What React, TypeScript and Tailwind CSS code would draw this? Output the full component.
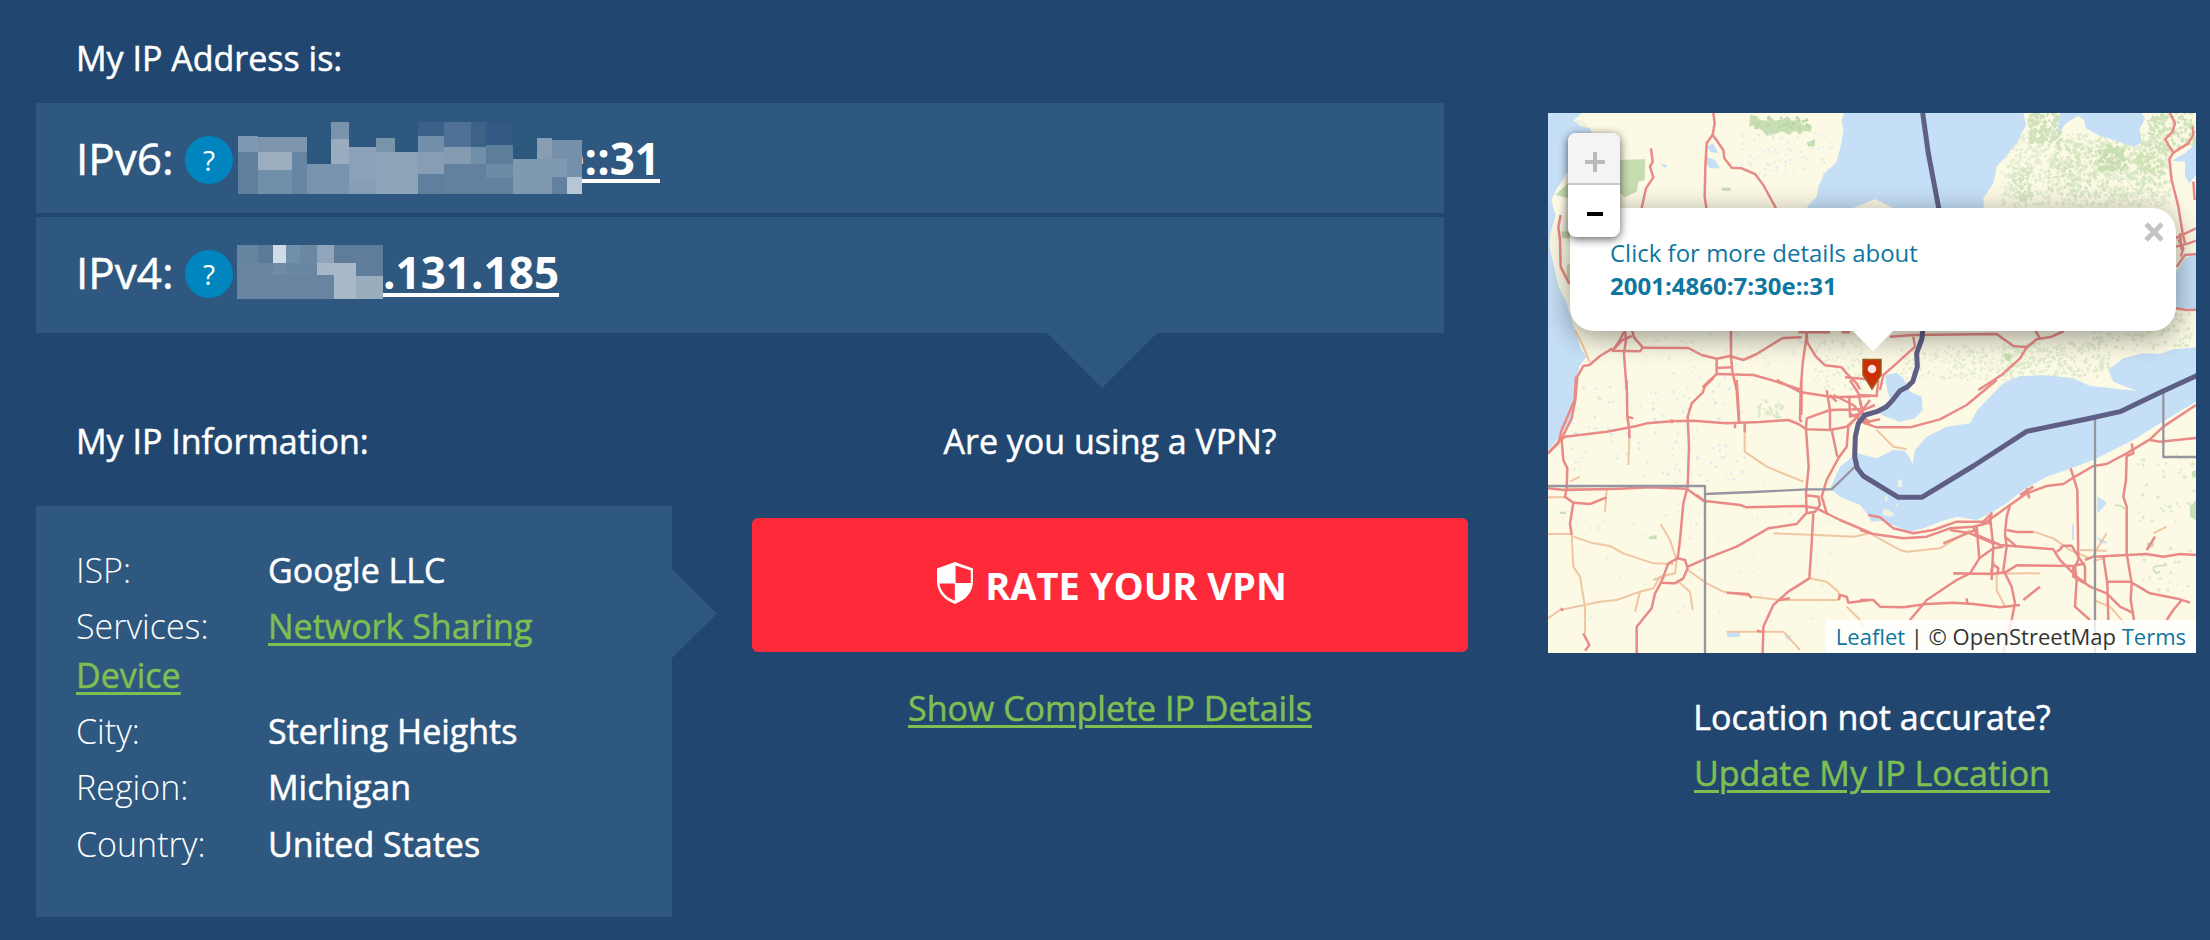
import React from "react";

type Cell = [number, number, number, number, string];

const cellsV6: Cell[] = [
  [0, 0, 207, 90, "#2c587f"],
  [0, 42, 60, 48, "#7e9ab2"],
  [60, 45, 147, 45, "#7e95ae"],
  [0, 90, 60, 126, "#5f809f"],
  [60, 90, 102, 54, "#9aaebf"],
  [60, 144, 102, 72, "#708fa9"],
  [162, 90, 45, 126, "#6685a2"],
  [207, 0, 72, 126, "#2c587f"],
  [207, 126, 126, 90, "#7893ac"],
  [279, 0, 54, 51, "#7893aa"],
  [279, 51, 54, 75, "#9aadbe"],
  [333, 75, 81, 99, "#8ba1ba"],
  [333, 174, 81, 42, "#869db6"],
  [414, 48, 57, 42, "#7894ab"],
  [414, 90, 126, 126, "#8ca3b8"],
  [540, 0, 78, 42, "#3a6187"],
  [540, 42, 78, 48, "#718fa8"],
  [540, 90, 78, 66, "#869db4"],
  [540, 156, 78, 60, "#5f7f9e"],
  [618, 0, 81, 75, "#4f7195"],
  [618, 75, 81, 51, "#839cb2"],
  [618, 126, 207, 90, "#62819f"],
  [699, 0, 45, 75, "#3c6288"],
  [699, 75, 45, 51, "#718fa8"],
  [744, 0, 81, 69, "#335a85"],
  [744, 69, 81, 57, "#5d7e9b"],
  [744, 126, 81, 42, "#6b8ba6"],
  [825, 0, 207, 111, "#2c587e"],
  [825, 111, 162, 105, "#7e99b0"],
  [897, 48, 45, 63, "#869db3"],
  [942, 54, 90, 57, "#7590aa"],
  [987, 111, 45, 54, "#7590aa"],
  [942, 165, 45, 51, "#62819e"],
  [987, 165, 45, 51, "#b6c6d4"],
];

const cellsV4: Cell[] = [
  [0, 0, 438, 162, "#6884a0"],
  [0, 0, 63, 54, "#66849f"],
  [63, 0, 45, 54, "#5b7c99"],
  [108, 0, 39, 54, "#cfdbe5"],
  [147, 0, 42, 54, "#718eaa"],
  [108, 54, 39, 36, "#6f8ba8"],
  [189, 0, 51, 54, "#6b88a3"],
  [147, 54, 93, 36, "#6a87a2"],
  [240, 0, 51, 54, "#90a5b9"],
  [291, 0, 147, 93, "#5f7d9b"],
  [240, 54, 117, 36, "#a6b8c7"],
  [291, 54, 66, 108, "#a8bac9"],
  [357, 93, 81, 69, "#9aadbf"],
];

function Mosaic({ cells, w, h }: { cells: Cell[]; w: number; h: number }) {
  return (
    <svg width={w} height={h} viewBox={`0 0 ${w * 3} ${h * 3}`} shapeRendering="crispEdges" className="block shrink-0">
      {cells.map(([x, y, cw, ch, f], i) => (
        <rect key={i} x={x} y={y} width={cw} height={ch} fill={f} />
      ))}
    </svg>
  );
}

function Help() {
  return (
    <span className="mt-1 flex size-12 shrink-0 items-center justify-center rounded-full bg-[#0085be] text-[28px] leading-none">
      ?
    </span>
  );
}

function Shield() {
  return (
    <svg width="36" height="42" viewBox="0 0 36 42" className="-mt-1 block shrink-0">
      <path
        fill="#fff"
        fillRule="evenodd"
        d="M18 0L36 6.500V19C36 31 28 38 18 42C8 38 0 31 0 19V6.500ZM18.600 3.500V21H33.800V8.600ZM17.800 21.600H2.400C3.400 29.500 9 35.500 17.800 38.800Z"
      />
    </svg>
  );
}

// Deterministic scatter of small specks used for woodland and ponds.
function specks(seed: number, n: number, x: number, y: number, w: number, h: number, size: number) {
  let s = seed;
  const r = () => {
    s = (s * 16807) % 2147483647;
    return s / 2147483647;
  };
  let d = "";
  for (let i = 0; i < n; i++) {
    const px = Math.round(x + r() * w);
    const py = Math.round(y + r() * h);
    const a = Math.round(2 + r() * size);
    const b = Math.round(2 + r() * size);
    d += `M${px} ${py}l${a} ${-b}l${b} ${a}l${-a} ${b}z`;
  }
  return d;
}

const redA = [
  "M520 39L524 70L518 104L500 130L496 200L494 290L500 330",
  "M518 104L550 150L553 175L575 203L605 205L645 222L670 255L708 325",
  "M333 145L338 185L330 200L340 232L318 265L305 325",
  "M62 345L55 380L60 420L62 500L88 552",
  "M255 690L258 720L252 760L260 870",
  "M252 695L240 720L218 752L300 754L308 742L282 712L276 690",
  "M218 745L180 768L148 795L130 798L112 830L106 900L95 955L65 1015L24 1060",
  "M218 752L245 722L275 708",
  "M305 743L445 744L485 765L530 776L570 768L610 780L650 762L728 714L785 712",
  "M573 693L573 770L578 820L590 870L597 970",
  "M530 776L530 822L490 860L510 840M530 804L575 802",
  "M530 822L640 825L700 842L780 868",
  "M785 690L800 700L798 720L788 790L782 870L780 960L786 965",
  "M800 700L802 728L828 770L855 796L905 802L920 820L950 850L960 868M775 697L870 697M905 697L930 697M915 832L985 838",
];
const redB = [
  "M930 39L945 70L938 95L915 118L940 158L928 178L935 240L955 320L968 400L975 430",
  "M940 158L985 130L1000 105L998 80",
  "M1000 245L1004 300M945 415L1008 385M948 440L985 430L1008 422M950 500L975 465L1008 462M955 418L970 445L962 470M948 625L980 630L1008 629M960 400L965 450",
  "M90 710L160 705L410 702L460 738L500 742L530 718L575 710L612 693",
  "M500 742L480 775L425 825L355 870M160 710L165 740L110 790L70 825L60 870M525 690L540 715",
];
const redC = [
  "M108 -10L104 60L65 150L55 190L24 220",
  "M55 185L75 170L200 155L290 138L320 130L395 124L460 122L560 130L660 126L745 120L775 132L800 148L870 150",
  "M260 0L262 110L268 150L268 175M262 110L280 115M395 118L395 130M585 130L585 145M614 130L614 158",
  "M520 -5L495 18L488 38L455 70L443 110L447 200L443 320L430 370L420 480L413 535",
  "M710 0L780 36L880 52L935 50L990 48",
  "M590 0L594 60L598 130M783 0L785 40L784 105",
  "M800 115L798 148L806 260L798 340L800 400L825 395L840 375L835 350L798 346",
  "M65 180L70 240L82 265L80 325L75 350L100 368L90 430L95 465",
  "M24 325L75 330L240 326L330 322L440 326L490 362L600 375L620 382L790 378L830 385L900 420L990 458",
  "M100 368L150 372L200 352M470 345L500 368",
  "M413 535L385 550L363 608L405 610L430 595L443 565L435 540L413 535",
  "M363 608L345 640L335 685L290 740L290 820",
  "M443 560L500 535L590 500L685 445L770 432L798 400",
  "M820 400L815 490L808 595L745 635L700 675L670 740L668 820",
  "M990 60L960 100L925 140L920 200L895 235L860 300L845 350L862 405M875 150L892 230M870 150L920 140L960 105",
  "M560 638L625 642L635 655M720 660L750 655M895 660L900 645L920 650L925 668L990 660M650 752L665 755M62 685L70 692M130 760L148 795L135 812",
  "M870 90L870 148M928 50L930 110L960 100M870 90L960 88M800 115L870 90M880 45L940 75L990 130M930 0L955 40L970 110M860 30L870 90M890 65L870 45",
];
const redD = [
  "M10 128L50 142L150 142L240 118L320 75L410 0",
  "M0 45L50 48L55 0M0 95L45 75M10 128L60 118M0 60L15 130L-30 100",
  "M0 450L40 462L130 475L200 470L270 445L340 440L380 430",
  "M25 405L60 412L100 445L160 460L220 450L290 425L380 425L450 375L500 340L560 318L610 312L640 293L700 258L740 252L800 220L870 178L910 140L1008 75",
  "M480 345L520 320M500 325L508 355M632 265L640 290L652 330L655 540L645 560L650 600L645 680L690 720",
  "M815 190L820 220L800 228L798 300L790 350L800 380L800 520L815 610L812 660L822 720",
  "M870 180L900 185L1008 174",
  "M450 375L440 410L435 460L440 500L430 570L455 620L465 670L455 720L430 820",
  "M390 410L400 500L395 600M350 440L358 535L330 580L290 600L200 660L150 720",
  "M340 440L350 465L420 495L580 508L600 540L650 590L690 620L740 640L780 680L822 700",
  "M250 490L350 448M270 450L330 460L400 490M440 450L470 456L520 456M435 470L470 500",
  "M600 505L610 497L635 497L655 530L675 560L675 610M605 505L590 515",
  "M280 580L400 582L440 575L470 556L640 558L675 550M675 540L700 530L860 522L910 530L960 522L1008 525",
  "M0 660L40 660L60 680L130 682L200 672L280 668L340 672L420 682L480 675M320 655L322 672M490 660L540 620",
  "M395 550L415 565L412 582M400 545L392 582M358 535L400 505L430 500M730 530L742 610L745 720M740 605L810 605L870 640L960 658L990 668M965 660L940 690L920 720",
  "M860 510L885 470M640 560L640 590L675 610M370 425L395 400L388 430Z",
];
const orange = [
  "M100 1310L160 1330L210 1338L250 1360L340 1390L400 1392M24 1302L95 1302L100 1400L120 1430L135 1520L135 1600",
  "M24 1555L60 1530L180 1505L230 1500L300 1475L340 1465L360 1430L405 1420L410 1380L390 1320L362 1272",
  "M443 1410L500 1450L550 1475L640 1490L720 1500L895 1500M410 1440L450 1475L458 1530M300 1475L285 1535",
  "M614 1000L614 1055L680 1100L740 1125L790 1145M268 1015L265 1095M700 1300L830 1305L940 1310L990 1300L1080 1350L1100 1355L1200 1345L1290 1290",
  "M808 1435L860 1445L895 1475L900 1500M920 1520L960 1560L970 1580M90 1145L120 1130M75 1165L200 1168L195 1235M24 1192L75 1192M730 1595L780 1650M560 1595L730 1595",
  "M105 690L130 740L148 785M1010 990L1060 1040L1100 1047M1480 1295L1540 1315L1590 1350L1650 1375M1370 1420L1370 1470L1395 1520M1700 1300L1660 1365M1240 1422L1500 1420M1840 1300L1880 1280",
  "M340 1440L380 1425M1620 1350L1700 1352M1660 1385L1700 1370M1660 1500L1710 1520L1780 1600",
];

function MapArt() {
  return (
    <svg width="648" height="540" viewBox="24 39 1944 1620" preserveAspectRatio="none" className="block">
      <defs>
        <filter id="soft" x="0" y="0" width="1" height="1">
          <feGaussianBlur stdDeviation="0.700" />
        </filter>
      </defs>
      <g filter="url(#soft)" strokeLinejoin="round">
        <rect x="0" y="0" width="2000" height="1700" fill="#fcfae5" />
        <path fill="#c7dcb0" d="M235 180L316 178L314 240L295 245L290 275L255 292L240 280ZM45 285L85 250V295ZM545 263H572V272H545ZM800 128L825 118V138L805 140ZM65 395L90 392V415H65ZM80 495L92 490V550L80 540Z" />
        <path fill="#c9deb3" d="M630 45L650 48L660 60L680 62L690 50L705 62L730 56L742 48L756 62L775 60L790 75L815 78L814 95L790 92L780 104L762 88L750 105L725 94L700 104L680 108L668 92L655 85L645 88L640 76L628 80Z" />
        <path fill="#b9d6a3" d={specks(3, 30, 640, 50, 160, 45, 6)} />
        <path fill="#e3edcf" d={specks(7, 900, 1380, 100, 510, 220, 6)} />
        <path fill="#d6e6c1" d={specks(5, 320, 1520, 120, 350, 170, 7)} />
        <path fill="#d0e2ba" d={specks(17, 160, 1460, 39, 95, 90, 7)} />
        <path fill="#d6e6c1" d={specks(27, 80, 1410, 200, 60, 100, 6)} />
        <path fill="#cfe2b8" d={specks(37, 150, 1820, 39, 145, 110, 7)} />
        <path fill="#c9dfb3" d={specks(47, 90, 1670, 140, 80, 70, 8)} />
        <path fill="#cfe2b8" d={specks(49, 60, 1780, 160, 90, 60, 7)} />
        <path fill="#dfebcc" d={specks(57, 260, 1380, 730, 330, 100, 6)} />
        <path fill="#e3edd2" d={specks(67, 200, 1080, 740, 360, 100, 5)} />
        <path fill="#dfebcc" d={specks(77, 110, 1650, 640, 300, 110, 6)} />
        <path fill="#dcebc9" d={specks(87, 40, 650, 900, 75, 55, 6)} />
        <path fill="#e2edd2" d={specks(97, 90, 820, 720, 150, 160, 4)} />
        <path fill="#dcebc9" d={specks(107, 60, 1790, 1060, 170, 420, 6)} />
        <path fill="#c9dfb5" d="M1955 1115L1968 1110V1130L1958 1135ZM1950 1220L1968 1200V1260L1950 1250ZM1390 760L1415 765L1410 785L1395 778ZM325 1310L350 1305V1318H328ZM60 1235H78V1242H60ZM1820 1330L1840 1325L1842 1340L1825 1345Z" />
        <path fill="none" stroke="#cbe0b6" strokeWidth="5" d="M1838 1405L1850 1398L1880 1396M1838 1408L1850 1420L1860 1415M1725 1215L1745 1218L1755 1228" />
        <path fill="#dfeaec" d={specks(117, 110, 90, 850, 520, 300, 5)} />
        <path fill="#e2ecec" d={specks(127, 80, 600, 100, 280, 130, 4)} />
        <path fill="#e6eee9" d={specks(137, 90, 100, 1150, 800, 420, 4)} />
        <path fill="#e6eee9" d={specks(147, 60, 300, 700, 480, 140, 4)} />

        <g fill="#c5dff6">
          <path d="M24 39H125L100 62L150 85L160 110L120 160L95 200L75 228L48 270L34 300L46 345L32 400L28 440L42 500L56 560L80 610L104 690L122 745L138 770L118 800L106 850L100 940L66 1000L38 1035L24 1052Z" />
          <path d="M912 39L905 60L910 90L904 130L890 185L852 222L835 260L830 290L802 320V400H940V324L990 303L1005 297L1060 324V400H1330L1332 324L1330 295L1360 250L1370 200L1430 130L1458 75L1450 39Z" />
          <path d="M1560 39L1552 100L1580 68L1615 48L1632 60L1638 85L1680 108L1715 118L1750 130L1780 142L1805 125L1798 90L1815 55L1805 39Z" />
          <path d="M1895 182L1935 160L1968 130V225L1948 250L1935 230V185Z" />
          <path d="M1908 515L1935 475L1968 462V628L1905 622Z" />
          <path d="M1035 825L1070 818L1090 835L1110 875L1145 890L1148 930L1125 955L1080 965L1025 945L1010 930L1050 900L1040 860Z" />
          <path d="M870 1165L900 1100L950 1060L1010 1075L1060 1050L1095 1052L1113 1080L1117 1095L1125 1050L1160 1010L1220 980L1290 970L1312 930L1360 880L1390 850L1440 828L1520 826L1600 835L1650 858L1690 862L1740 868L1790 872L1720 845L1705 810L1750 775L1810 760L1860 762L1900 748L1968 742V905L1860 970L1780 1020L1660 1080L1580 1110L1520 1130L1450 1170L1400 1210L1350 1240L1310 1260L1250 1250L1200 1265L1150 1285L1110 1295L1070 1280L1030 1262L995 1265L980 1240L960 1215L900 1190Z" />
          <path d="M500 140L520 130L535 160L512 155ZM500 170L525 180L540 205L510 205L498 190ZM362 192L382 195L375 205ZM560 1598L600 1592V1610L562 1612ZM735 1610L755 1606L748 1622ZM1596 1275L1602 1272V1320H1597ZM1672 1190L1690 1200L1700 1210L1672 1240ZM1672 1310L1705 1330L1680 1330Z" />
        </g>
        <path fill="#f2f3df" d="M102 60L128 60L150 85L120 78ZM1075 1140L1087 1138L1085 1162L1073 1160ZM1035 1190L1042 1188V1202H1035ZM1030 1228L1045 1230L1062 1242L1055 1250L1028 1246ZM1068 1212L1075 1214L1070 1222Z" />

        <g fill="none" stroke="#f0c6a2" strokeWidth="6">
          {orange.map((d) => (
            <path key={d} d={d} />
          ))}
        </g>
        <g fill="none" stroke="#e98a86" strokeWidth="7.500">
          {redA.map((d) => (
            <path key={d} d={d} />
          ))}
          <g transform="translate(960 0)">
            {redB.map((d) => (
              <path key={d} d={d} />
            ))}
          </g>
          <g transform="translate(0 840)">
            {redC.map((d) => (
              <path key={d} d={d} />
            ))}
          </g>
          <g transform="translate(960 840)">
            {redD.map((d) => (
              <path key={d} d={d} />
            ))}
          </g>
        </g>
        <g fill="none" stroke="#9596a0" strokeWidth="7">
          <path d="M24 1158H495V1660M495 1182L640 1176L800 1168L875 1168L950 1095" />
          <path d="M1665 955V1660M1870 875V1071H1968" />
        </g>
        <path
          fill="none"
          stroke="#5e5f86"
          strokeWidth="15"
          d="M1148 39L1165 160L1196 324L1205 420L1180 560L1148 690L1146 715L1130 760L1132 800L1118 845L1100 862L1080 872L1060 898L1040 920L1010 935L975 945L955 970L946 1010L944 1070L952 1105L970 1128L1075 1192L1145 1192L1300 1098L1460 994L1640 957L1740 935L1865 875L1975 825"
        />
      </g>
    </svg>
  );
}

function MapPanel() {
  return (
    <div className="relative h-[540px] w-[648px] overflow-hidden">
      <MapArt />
      <svg width="22" height="34" viewBox="0 0 22 34" className="absolute left-[313px] top-[245px]">
        <path d="M2 1.500H20V17L16 23L11 31L6 23L2 17Z" fill="#cc2f05" stroke="#9a5a20" strokeWidth="1.500" />
        <circle cx="11" cy="11" r="4.300" fill="#fde3e3" />
      </svg>
      <div className="absolute left-[22px] top-[95px] h-[123px] w-[606px] rounded-[24px] bg-white pl-[40px] pt-[28px] text-[24px] leading-[33px] text-[#0f76a0] shadow-[0_6px_28px_rgba(0,0,0,0.4)]">
        <div>Click for more details about</div>
        <div className="font-bold">2001:4860:7:30e::31</div>
        <svg width="20" height="20" viewBox="0 0 20 20" className="absolute left-[574px] top-[14px]">
          <path d="M2 2L18 18M18 2L2 18" stroke="#c3c3c3" strokeWidth="4.800" />
        </svg>
      </div>
      <svg width="42" height="22" viewBox="0 0 42 22" className="absolute left-[304px] top-[217px]">
        <path d="M0 0H42L21 21.500Z" fill="#fff" />
      </svg>
      <div className="absolute left-[20px] top-[20px] flex h-[104px] w-[52px] flex-col overflow-hidden rounded-[8px] bg-white shadow-[0_2px_10px_rgba(0,0,0,0.65)]">
        <div className="flex h-[52px] items-center justify-center border-b-2 border-[#c8c8c8] bg-[#f4f4f4] pl-[2px] pt-[8px]">
          <svg width="20" height="20" viewBox="0 0 20 20">
            <path d="M10 0V20M0 10H20" stroke="#bbbbbb" strokeWidth="4" />
          </svg>
        </div>
        <div className="flex h-[52px] items-center justify-center pl-[2px] pt-[6px]">
          <svg width="16" height="4" viewBox="0 0 16 4">
            <path d="M0 2H16" stroke="#000" strokeWidth="4" />
          </svg>
        </div>
      </div>
      <div className="absolute bottom-0 right-0 h-[33px] whitespace-nowrap bg-white/80 px-[10px] text-[22px] leading-[33px] text-[#333]">
        <span className="text-[#0f76a0]">Leaflet</span> | © OpenStreetMap <span className="text-[#0f76a0]">Terms</span>
      </div>
    </div>
  );
}

const link = "text-[#7fbf52] underline decoration-[3px] underline-offset-[4px]";
const stout = "[-webkit-text-stroke:0.5px_currentColor]";

function Info({ label, children }: { label: string; children: React.ReactNode }) {
  return (
    <div className="mb-[7.7px]">
      <span className="inline-block w-48 font-light">{label}</span>
      <span className={stout}>{children}</span>
    </div>
  );
}

export default function App() {
  return (
    <div className="flex h-[940px] w-[2210px] overflow-hidden bg-[#214771] font-['Open_Sans',sans-serif] text-[34px] leading-[48.6px] text-white">
      <div className="w-[1468px] pl-9">
        <div className={"flex h-[103px] items-center pl-10 pt-3.5 " + stout}>My IP Address is:</div>
        <div className="relative w-[1408px]">
          <div className="flex h-[110px] items-center bg-[#2e587f] pl-10 text-[44px] leading-none">
            <span className={"w-[109px] whitespace-nowrap " + stout}>IPv6:</span>
            <Help />
            <span className="w-[5px]" />
            <Mosaic cells={cellsV6} w={344} h={72} />
            <span className="flex w-[78px] justify-end overflow-hidden font-bold leading-[64px]">
              <span className="underline decoration-[4px] underline-offset-[4px]">e::31</span>
            </span>
          </div>
          <div className="mt-1 flex h-[116px] items-center bg-[#2e587f] pb-[7px] pl-10 text-[44px] leading-none">
            <span className={"w-[109px] whitespace-nowrap " + stout}>IPv4:</span>
            <Help />
            <span className="w-[4px]" />
            <Mosaic cells={cellsV4} w={146} h={54} />
            <span className="font-bold underline decoration-[4px] underline-offset-[4px]">.131.185</span>
          </div>
          <svg width="110" height="55" viewBox="0 0 110 55" className="absolute left-[1011px] top-full">
            <path d="M0 0H110L55 55Z" fill="#2e587f" />
          </svg>
        </div>
        <div className="flex gap-20">
          <div className="w-[636px]">
            <div className={"flex h-[173px] items-center pl-10 pt-[44px] " + stout}>My IP Information:</div>
            <div className="relative h-[411px] bg-[#2e587f] px-10 pt-[40px]">
              <Info label="ISP:">Google LLC</Info>
              <Info label="Services:">
                <a className={link}>Network Sharing</a> <a className={link}>Device</a>
              </Info>
              <Info label="City:">Sterling Heights</Info>
              <Info label="Region:">Michigan</Info>
              <Info label="Country:">United States</Info>
              <svg width="45" height="89" viewBox="0 0 45 89" className="absolute left-full top-[63px]">
                <path d="M0 0L45 44.500L0 89Z" fill="#2e587f" />
              </svg>
            </div>
          </div>
          <div className="flex w-[716px] flex-col items-center">
            <div className={"flex h-[185px] items-center pt-[31px] " + stout}>Are you using a VPN?</div>
            <div className="flex h-[134px] w-full items-center justify-center gap-3 rounded-[6px] bg-[#ff2a39] pl-1 text-[38px] font-bold">
              <Shield />
              <span>RATE YOUR VPN</span>
            </div>
            <a className={"mt-[32px] " + link + " " + stout}>Show Complete IP Details</a>
          </div>
        </div>
      </div>
      <div className="ml-20 flex w-[648px] flex-col items-center pt-[113px]">
        <MapPanel />
        <div className={"mt-[40px] " + stout}>Location not accurate?</div>
        <a className={"mt-[7px] " + link + " " + stout}>Update My IP Location</a>
      </div>
    </div>
  );
}
